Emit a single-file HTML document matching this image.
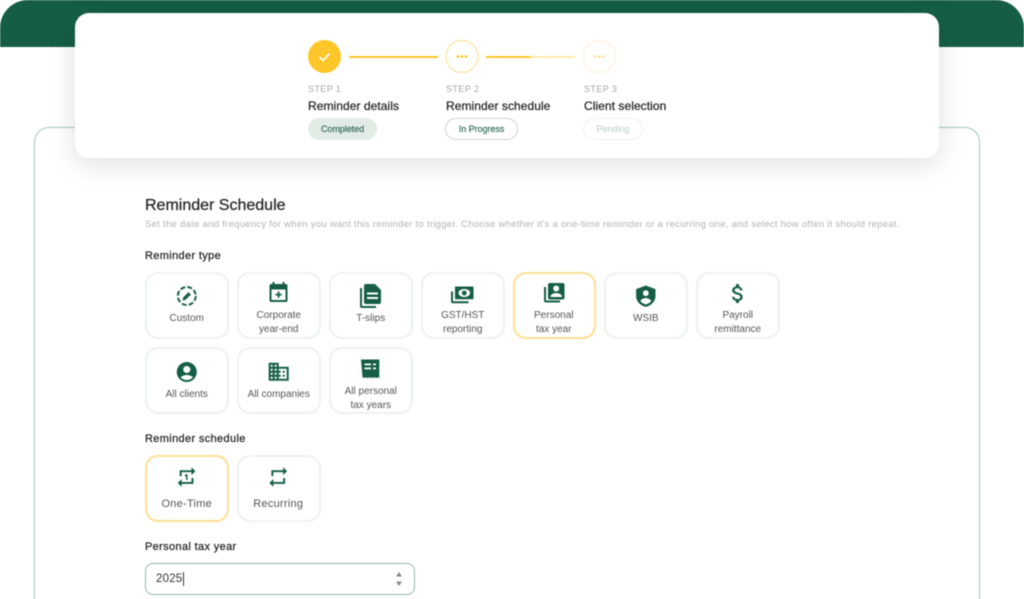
<!DOCTYPE html>
<html>
<head>
<meta charset="utf-8">
<style>
html,body{margin:0;padding:0;background:#fff;width:1024px;height:599px;overflow:hidden;}
#c{position:relative;width:1024px;height:599px;overflow:hidden;background:#fff;}
#f{position:absolute;left:-20px;top:-20px;width:1064px;height:639px;background:#fff;filter:blur(.4px);overflow:hidden;}
#p{position:absolute;left:20px;top:20px;width:1024px;height:599px;background:#fff;font-family:"Liberation Sans",sans-serif;}
#p div{position:absolute;box-sizing:border-box;}
.hd{left:-20px;top:-20px;width:1064px;height:33px;background:#155e45;}
.hm{left:0;top:0;width:1024px;height:47px;background:#155e45;border-radius:28px 28px 0 0;}
.out{left:34px;top:127px;width:946px;height:492px;border:1px solid #a3c4b8;border-bottom:0;border-radius:15px 15px 0 0;}
.card{left:75px;top:13px;width:864px;height:145px;background:#fff;border-radius:14px;box-shadow:0 6px 28px rgba(0,0,0,.13);}
.t{white-space:nowrap;line-height:14px;height:14px;}
.sl{font-size:9px;color:#a6a6a6;letter-spacing:.4px;}
.st{font-size:12px;color:#262626;letter-spacing:.06px;-webkit-text-stroke:.25px #262626;}
.b{height:22px;border-radius:11px;font-size:9px;line-height:20px;text-align:center;letter-spacing:-.05px;-webkit-text-stroke:.15px currentColor;}
.sec{font-size:11px;color:#262626;letter-spacing:.35px;-webkit-text-stroke:.25px #262626;left:145px;}
.tile{width:83.5px;height:66.5px;border:2px solid #edf2f0;border-radius:13px;background:#fff;}
.sel{border-color:#ffdf93;}
.lb{font-size:10px;color:#555;text-align:center;width:83.5px;letter-spacing:0;}
.big{font-size:11px;letter-spacing:.25px;}
svg{position:absolute;left:0;top:0;}
</style>
</head>
<body>
<div id="c">
<div id="f">
<div id="p">
<div class="hm"></div>
<div class="out"></div>
<div class="card"></div>

<div class="t sl" style="left:308px;top:82px">STEP 1</div>
<div class="t st" style="left:308px;top:98.5px">Reminder details</div>
<div class="b" style="left:308px;top:118px;width:69px;background:#e3ebe7;color:#2f6b55;line-height:22px">Completed</div>

<div class="t sl" style="left:446px;top:82px">STEP 2</div>
<div class="t st" style="left:446px;top:98.5px">Reminder schedule</div>
<div class="b" style="left:445px;top:118px;width:73px;border:1.5px solid #d0d0d0;color:#2f6b55">In Progress</div>

<div class="t sl" style="left:584px;top:82px">STEP 3</div>
<div class="t st" style="left:584px;top:98.5px">Client selection</div>
<div class="b" style="left:583px;top:118px;width:60px;border:1.5px solid #f0f0f0;color:#c3d6cf">Pending</div>

<div class="t" style="left:145px;top:196.5px;height:18px;line-height:18px;font-size:16px;color:#262626;letter-spacing:0;-webkit-text-stroke:.25px #262626">Reminder Schedule</div>
<div class="t" style="left:145px;top:218px;font-size:9.5px;color:#b2b2b2;letter-spacing:.28px">Set the date and frequency for when you want this reminder to trigger. Choose whether it's a one-time reminder or a recurring one, and select how often it should repeat.</div>
<div class="t sec" style="top:248.5px">Reminder type</div>

<div class="tile" style="left:145px;top:272px;width:84px"></div>
<div class="tile" style="left:237px;top:272px"></div>
<div class="tile" style="left:329px;top:272px"></div>
<div class="tile" style="left:421px;top:272px"></div>
<div class="tile sel" style="left:512.5px;top:272px"></div>
<div class="tile" style="left:604px;top:272px"></div>
<div class="tile" style="left:696px;top:272px"></div>
<div class="tile" style="left:145px;top:347px;width:84px"></div>
<div class="tile" style="left:237px;top:347px"></div>
<div class="tile" style="left:329px;top:347px"></div>

<div class="t lb" style="left:145px;top:312px">Custom</div>
<div class="t lb" style="left:237px;top:309px">Corporate</div>
<div class="t lb" style="left:237px;top:322.500px">year-end</div>
<div class="t lb" style="left:329px;top:312px">T-slips</div>
<div class="t lb" style="left:421px;top:309px">GST/HST</div>
<div class="t lb" style="left:421px;top:322.500px">reporting</div>
<div class="t lb" style="left:512px;top:309px">Personal</div>
<div class="t lb" style="left:512px;top:322.500px">tax year</div>
<div class="t lb" style="left:604px;top:312px">WSIB</div>
<div class="t lb" style="left:696px;top:309px">Payroll</div>
<div class="t lb" style="left:696px;top:322.500px">remittance</div>
<div class="t lb" style="left:145px;top:388px">All clients</div>
<div class="t lb" style="left:237px;top:388px">All companies</div>
<div class="t lb" style="left:329px;top:385px">All personal</div>
<div class="t lb" style="left:329px;top:398.500px">tax years</div>

<div class="t sec" style="top:432px">Reminder schedule</div>
<div class="tile sel" style="left:145px;top:455px;width:84px"></div>
<div class="tile" style="left:237px;top:455px"></div>
<div class="t lb big" style="left:145px;top:496.500px">One-Time</div>
<div class="t lb big" style="left:236.500px;top:496.500px">Recurring</div>

<div class="t sec" style="top:540px">Personal tax year</div>
<div style="left:145px;top:563px;width:270px;height:32px;border:1.5px solid #94b9ab;border-radius:8px;background:#fff"></div>
<div class="t" style="left:156px;top:572px;font-size:11.500px;color:#333;letter-spacing:.2px">2025</div>
<div style="left:183px;top:572px;width:1px;height:14px;background:#333"></div>

<svg width="1024" height="599" viewBox="0 0 1024 599">
<circle cx="324.500" cy="56.500" r="16.500" fill="#ffc629"/>
<path d="M319.500 57l3.600 3.600 6.600-7.200" fill="none" stroke="#fff" stroke-width="1.600"/>
<rect x="349" y="56" width="89" height="2" fill="#ffc629"/>
<circle cx="462" cy="56.500" r="16" fill="#fff" stroke="#ffe39c" stroke-width="1.200"/>
<g fill="#ffc629"><circle cx="458" cy="56.500" r="1.400"/><circle cx="462" cy="56.500" r="1.400"/><circle cx="466" cy="56.500" r="1.400"/></g>
<rect x="486" y="56" width="45" height="2" fill="#ffc629"/>
<rect x="531" y="56" width="44" height="2" fill="#ffe9b0"/>
<circle cx="599.500" cy="56.500" r="16" fill="#fff" stroke="#fff3d6" stroke-width="1.200"/>
<g fill="#ffe39c"><circle cx="595.500" cy="56.500" r="1.400"/><circle cx="599.500" cy="56.500" r="1.400"/><circle cx="603.500" cy="56.500" r="1.400"/></g>

<g fill="#155e45">
<circle cx="186.800" cy="296" r="9" fill="none" stroke="#155e45" stroke-width="2" stroke-dasharray="5 2.100"/>
<path d="M182.500 300.500l.6-3 5.400-5.400 2.400 2.400-5.400 5.400z"/>
<path fill-rule="evenodd" d="M272.500 282h2v2h8v-2h2v2h1.200c1 0 1.800.8 1.800 1.800v14.400c0 1-.8 1.800-1.800 1.800h-14.400c-1 0-1.800-.8-1.800-1.800v-14.400c0-1 .8-1.800 1.800-1.800h1.200zM271.500 289.500v10.500h14v-10.500z"/>
<path d="M277.700 291.500h1.800v2.200h2.200v1.800h-2.200v2.200h-1.800v-2.200h-2.200v-1.800h2.200z"/>
<path d="M360 288h2v18h14v2h-14a2 2 0 0 1-2-2z"/>
<path fill-rule="evenodd" d="M366 284h9l6 6v12a2 2 0 0 1-2 2h-13a2 2 0 0 1-2-2v-16a2 2 0 0 1 2-2zM367 292.500v2h11v-2zM367 297v2h11v-2z"/>
<path d="M451 291.500h2v9.700h15.500v2h-15.500a2 2 0 0 1-2-2z"/>
<rect x="455" y="286.500" width="18.500" height="12.800" rx=".8"/>
<ellipse cx="464.300" cy="293" rx="5.800" ry="4" fill="#fff"/>
<circle cx="464.300" cy="293" r="2.400"/>
<path d="M544 287h2v13.500h14v2h-14a2 2 0 0 1-2-2z"/>
<path fill-rule="evenodd" d="M550 283h12.500a2 2 0 0 1 2 2v12.500a2 2 0 0 1-2 2H550a2 2 0 0 1-2-2V285a2 2 0 0 1 2-2zM556.200 285.500a3 3 0 1 0 0 6 3 3 0 0 0 0-6zM550.500 297h11.500c0-2.600-3-4-5.800-4s-5.700 1.400-5.700 4z"/>
<path fill-rule="evenodd" d="M645.800 285.500l9.700 3.600v7c0 5-4 9.400-9.700 10.800-5.700-1.400-9.700-5.800-9.700-10.800v-7zM645.800 290.300a2.900 2.900 0 1 0 0 5.800 2.900 2.900 0 0 0 0-5.800zM640.300 301c1.300 1.600 3.300 2.800 5.500 3.400 2.200-.6 4.200-1.800 5.500-3.400-1.300-2-3.400-3-5.500-3s-4.200 1-5.500 3z"/>
<path transform="translate(725.400 281) scale(1.05)" d="M11.800 10.900c-2.270-.59-3-1.200-3-2.150 0-1.090 1.010-1.850 2.700-1.850 1.780 0 2.440.85 2.500 2.100h2.210c-.07-1.720-1.120-3.300-3.210-3.810V3h-3v2.160c-1.940.42-3.500 1.680-3.500 3.610 0 2.310 1.910 3.460 4.700 4.130 2.500.6 3 1.480 3 2.410 0 .69-.49 1.790-2.700 1.790-2.060 0-2.870-.92-2.980-2.100h-2.200c.12 2.190 1.760 3.420 3.680 3.830V21h3v-2.150c1.950-.37 3.500-1.500 3.500-3.550 0-2.840-2.430-3.810-4.700-4.400z"/>
<path fill-rule="evenodd" transform="translate(174.800 360)" d="M12 2C6.480 2 2 6.480 2 12s4.480 10 10 10 10-4.480 10-10S17.520 2 12 2zm0 4c1.930 0 3.500 1.570 3.500 3.500S13.930 13 12 13s-3.500-1.570-3.500-3.500S10.070 6 12 6zm0 14c-2.030 0-4.430-.82-6.140-2.880C7.550 15.800 9.680 15 12 15s4.450.8 6.140 2.120C16.430 19.180 14.030 20 12 20z"/>
<path transform="translate(266.700 359.700)" d="M12 7V3H2v18h20V7H12zM6 19H4v-2h2v2zm0-4H4v-2h2v2zm0-4H4V9h2v2zm0-4H4V5h2v2zm4 12H8v-2h2v2zm0-4H8v-2h2v2zm0-4H8V9h2v2zm0-4H8V5h2v2zm10 12h-8v-2h2v-2h-2v-2h2v-2h-2V9h8v10zm-2-8h-2v2h2v-2zm0 4h-2v2h2v-2z"/>
<path fill-rule="evenodd" d="M361 359.500h18.300v18.800l-1.500-1.200-1.500 1.200-1.500-1.200-1.500 1.200-1.500-1.200-1.500 1.200-1.500-1.200-1.500 1.200-1.500-1.200-1.500 1.200-1.800-1.200zM364.500 363.500v1.800h6.500v-1.800zM364.500 367.500v1.800h6.500v-1.800zM373 363.500v1.800h3v-1.800zM373 367.500v1.800h3v-1.800z"/>
<path transform="translate(174.800 465.300) scale(.98)" d="M7 7h10v3l4-4-4-4v3H5v6h2V7zm10 10H7v-3l-4 4 4 4v-3h12v-6h-2v4zm-4-2V9h-1l-2 1v1h1.500v4H13z"/>
<path transform="translate(266.500 465.300) scale(.98)" d="M7 7h10v3l4-4-4-4v3H5v6h2V7zm10 10H7v-3l-4 4 4 4v-3h12v-6h-2v4z"/>
</g>
<path d="M399 572l3 4.500h-6z" fill="#8a8a8a"/>
<path d="M399 586l3-4.500h-6z" fill="#8a8a8a"/>
</svg>
</div>
</div>
</div>
</body>
</html>
